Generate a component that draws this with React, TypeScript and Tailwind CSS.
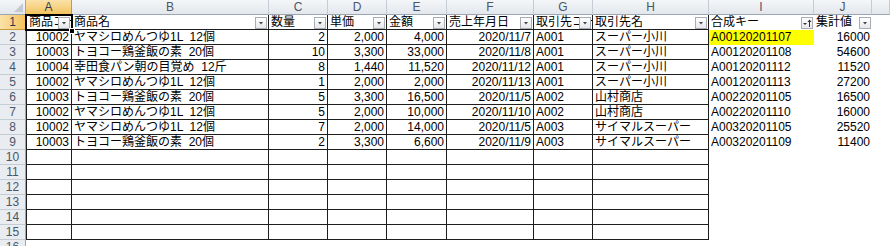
import React from 'react';

type Align = 'l' | 'r';

const colLetters = ['A', 'B', 'C', 'D', 'E', 'F', 'G', 'H', 'I', 'J', ''];

// A..J alignment
const align: Align[] = ['r', 'l', 'r', 'r', 'r', 'r', 'l', 'l', 'l', 'r', 'l'];

const header = ['商品コード', '商品名', '数量', '単価', '金額', '売上年月日', '取引先コード', '取引先名', '合成キー', '集計値'];

const rows: string[][] = [
	['10002', 'ヤマシロめんつゆ1L  12個', '2', '2,000', '4,000', '2020/11/7', 'A001', 'スーパー小川', 'A00120201107', '16000'],
	['10003', 'トヨコー鶏釜飯の素  20個', '10', '3,300', '33,000', '2020/11/8', 'A001', 'スーパー小川', 'A00120201108', '54600'],
	['10004', '幸田食パン朝の目覚め  12斤', '8', '1,440', '11,520', '2020/11/12', 'A001', 'スーパー小川', 'A00120201112', '11520'],
	['10002', 'ヤマシロめんつゆ1L  12個', '1', '2,000', '2,000', '2020/11/13', 'A001', 'スーパー小川', 'A00120201113', '27200'],
	['10003', 'トヨコー鶏釜飯の素  20個', '5', '3,300', '16,500', '2020/11/5', 'A002', '山村商店', 'A00220201105', '16500'],
	['10002', 'ヤマシロめんつゆ1L  12個', '5', '2,000', '10,000', '2020/11/10', 'A002', '山村商店', 'A00220201110', '16000'],
	['10002', 'ヤマシロめんつゆ1L  12個', '7', '2,000', '14,000', '2020/11/5', 'A003', 'サイマルスーパー', 'A00320201105', '25520'],
	['10003', 'トヨコー鶏釜飯の素  20個', '2', '3,300', '6,600', '2020/11/9', 'A003', 'サイマルスーパー', 'A00320201109', '11400'],
];

function FilterButton({ sorted }: { sorted?: boolean }) {
	return (
		<div className="absolute right-[1px] top-[2px] w-[12px] h-[12px] border border-[#a9adb3] bg-gradient-to-b from-white to-[#e6e8eb] flex items-center justify-center">
			<svg width="10" height="10" viewBox="0 0 10 10">
				{sorted ? (
					<>
						<polygon points="1,5 5,5 3,7" fill="#333" />
						<line x1="7.5" y1="2" x2="7.5" y2="9" stroke="#333" strokeWidth="1" />
						<polygon points="5.5,4 9.5,4 7.5,1.5" fill="#333" />
					</>
				) : (
					<polygon points="3,4 7,4 5,6.5" fill="#444" />
				)}
			</svg>
		</div>
	);
}

function Cell({
	r,
	c,
	value,
}: {
	r: number;
	c: number;
	value: string;
}) {
	const bordered = c <= 7 && r <= 15;
	const cls = [
		'relative h-[15px] overflow-hidden whitespace-pre leading-[15px] px-[2px]',
		align[c] === 'r' && r > 1 ? 'text-right' : 'text-left',
		bordered ? 'border-r border-b border-[#1e1e1e]' : '',
		bordered && c === 0 ? 'border-l' : '',
		r === 2 && c === 8 ? 'bg-[#ffff00]' : 'bg-white',
	].join(' ');
	return (
		<div className={cls}>
			{value}
			{r === 1 && c <= 9 && <FilterButton sorted={c === 8} />}
		</div>
	);
}

export default function App() {
	const all: string[][] = [header, ...rows];
	return (
		<div className="relative w-[890px] h-[246px] overflow-hidden bg-white text-[12px] text-black font-['Liberation_Sans','Noto_Sans_CJK_JP',sans-serif]">
			<div className="grid grid-cols-[26px_46px_197px_59px_59px_60px_87px_59px_116px_105px_58px_1fr] grid-rows-[15px]">
				{/* corner */}
				<div className="relative h-[15px] border-r border-b border-[#9ba6b4] bg-gradient-to-b from-[#f4f6f8] to-[#e3e7ec]">
					<svg className="absolute right-[2px] bottom-[2px]" width="9" height="9" viewBox="0 0 9 9">
						<polygon points="9,0 9,9 0,9" fill="#c2c9d2" />
					</svg>
				</div>
				{colLetters.map((l, i) => (
					<div
						key={i}
						className={
							i === 0
								? 'h-[15px] leading-[14px] text-center text-[12px] text-[#2f3b4c] border-r border-b border-[#c79a3a] bg-gradient-to-b from-[#fbe2a8] to-[#f3c35c]'
								: 'h-[15px] leading-[14px] text-center text-[12px] text-[#4b5668] border-r border-b border-r-[#c6ccd4] border-b-[#9ba6b4] bg-gradient-to-b from-[#f4f6f8] to-[#e3e7ec]'
						}
					>
						{l}
					</div>
				))}

				{Array.from({ length: 16 }, (_, ri) => {
					const r = ri + 1;
					const data = all[ri] ?? [];
					return (
						<React.Fragment key={r}>
							<div
								className={
									r === 1
										? 'h-[15px] leading-[15px] text-center text-[12px] text-[#2f3b4c] border-r border-b border-[#c79a3a] bg-gradient-to-r from-[#fbe2a8] to-[#f3c35c]'
										: 'h-[15px] leading-[15px] text-center text-[12px] text-[#4b5668] border-r border-b border-r-[#9ba6b4] border-b-[#c6ccd4] bg-[#e9ecf0]'
								}
							>
								{r}
							</div>
							{colLetters.map((_, c) => (
								<Cell key={c} r={r} c={c} value={data[c] ?? ''} />
							))}
						</React.Fragment>
					);
				})}
			</div>

			{/* active cell A1 */}
			<div className="absolute left-[25px] top-[14px] w-[48px] h-[17px] border-2 border-black pointer-events-none" />
			<div className="absolute left-[69px] top-[28px] w-[6px] h-[6px] bg-black border border-white" />
		</div>
	);
}
